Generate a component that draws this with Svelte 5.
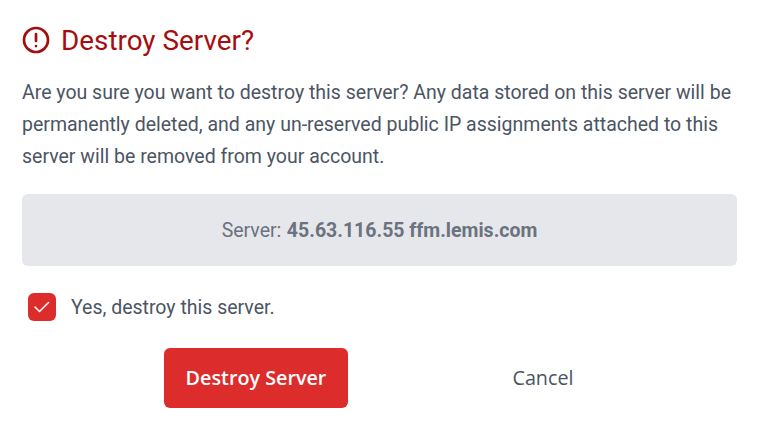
<script>
  let confirmed = $state(true);
</script>

<div class="dialog">
  <h2 class="title">
    <svg class="alert" viewBox="0 0 28 28" width="28" height="28" fill="none" stroke="currentColor" stroke-width="2.7" stroke-linecap="round">
      <circle cx="14" cy="14" r="12" />
      <path d="M14 8v7" />
      <path d="M14 20v.1" />
    </svg>
    Destroy Server?
  </h2>

  <p class="message">
    Are you sure you want to destroy this server? Any data stored on this server will be permanently deleted, and any un-reserved public IP assignments attached to this server will be removed from your account.
  </p>

  <div class="server">Server: <strong>45.63.116.55 ffm.lemis.com</strong></div>

  <label class="confirm">
    <input type="checkbox" bind:checked={confirmed} />
    <span class="box">
      {#if confirmed}
        <svg viewBox="0 0 16 16" width="16" height="16" fill="none" stroke="#fff" stroke-width="1.5" stroke-linecap="round" stroke-linejoin="round">
          <path d="M1 8l4.5 4.5 9-9" />
        </svg>
      {/if}
    </span>
    Yes, destroy this server.
  </label>

  <div class="actions">
    <button class="destroy">Destroy Server</button>
    <button class="cancel">Cancel</button>
  </div>
</div>

<style>
  :global(body) {
    background: #fff;
  }

  .dialog {
    padding: 22px 23px 0 22px;
    font-family: Roboto, sans-serif;
    color: #4b5563;
  }

  .title {
    display: flex;
    align-items: center;
    gap: 11px;
    margin: 0 0 19px;
    height: 36px;
    font-size: 27.85px;
    font-weight: 400;
    color: #a50e0e;
  }

  .message {
    margin: 0 0 21px;
    font-size: 19.5px;
    line-height: 32px;
  }

  .server {
    height: 72px;
    display: flex;
    align-items: center;
    justify-content: center;
    gap: 5.5px;
    background: #e5e7eb;
    border-radius: 6px;
    font-size: 19.5px;
    color: #6b7280;
  }

  .server strong {
    font-weight: 700;
  }

  .confirm {
    display: flex;
    align-items: center;
    gap: 15px;
    margin: 25px 0 25px 6px;
    height: 32px;
    font-size: 19.5px;
  }

  .confirm input {
    display: none;
  }

  .box {
    width: 28px;
    height: 28px;
    display: flex;
    align-items: center;
    justify-content: center;
    background: #dc2c2c;
    border-radius: 6px;
  }

  .actions {
    display: flex;
    gap: 103px;
    margin-left: 142px;
  }

  button {
    width: 184px;
    height: 60px;
    padding: 0 0 2px;
    border: none;
    border-radius: 6px;
    font-family: "Open Sans", sans-serif;
    font-size: 19.75px;
    cursor: pointer;
  }

  .destroy {
    background: #dc2c2c;
    color: #fff;
    font-weight: 600;
  }

  .cancel {
    background: none;
    color: #4b5563;
  }
</style>
